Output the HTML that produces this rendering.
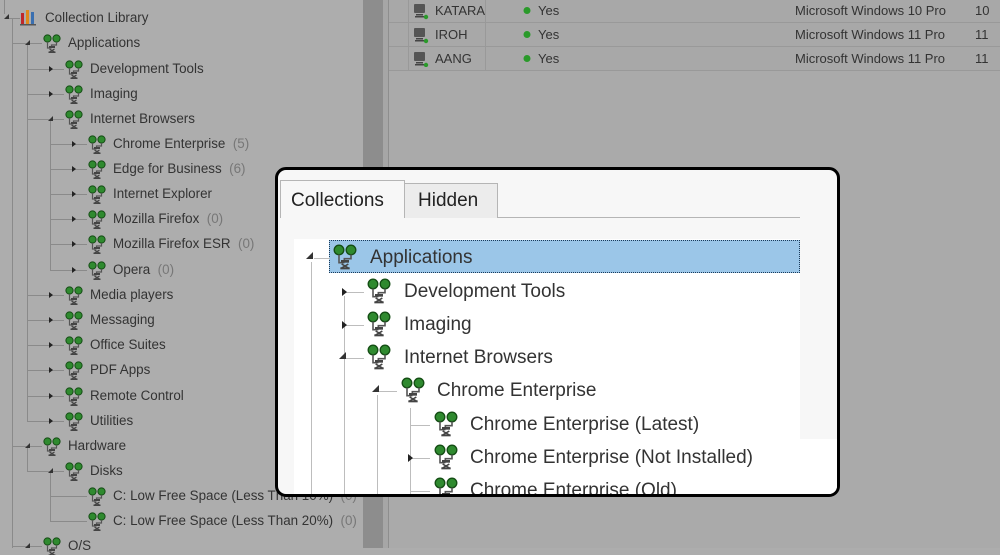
<!DOCTYPE html>
<html><head><meta charset="utf-8"><style>
*{margin:0;padding:0;box-sizing:border-box}
body{width:1000px;height:548px;overflow:hidden;background:#adadad;font-family:"Liberation Sans",sans-serif;position:relative}
.a{position:absolute}
.lt{position:absolute;font-size:13.4px;color:#333;white-space:nowrap;line-height:18px}
.lt .c{color:#777}
.vl{position:absolute;width:1px;background:#8a8a8a}
.hl{position:absolute;height:1px;background:#8a8a8a}
.ex{position:absolute;width:0;height:0;border-style:solid}
.col{border-width:3px 0 3px 4px;border-color:transparent transparent transparent #222}
.exp{border-width:0 0 5px 5px;border-color:transparent transparent #333 transparent}
.pt{position:absolute;font-size:19px;color:#333;white-space:nowrap;line-height:22px}
.pv{position:absolute;width:1px;background:#bdbdbd}
.ph{position:absolute;height:1px;background:#bdbdbd}
.tb{font-size:13px;color:#333;position:absolute;line-height:16px}
</style></head><body>
<svg width="0" height="0" style="position:absolute"><defs>
<g id="ico"><circle cx="4.5" cy="4.5" r="3.6" fill="#2f8a2f" stroke="#144d14" stroke-width="1"/><circle cx="13.5" cy="4.5" r="3.6" fill="#2f8a2f" stroke="#144d14" stroke-width="1"/><path d="M4.5 8v6h4M13.5 8v3h-5v3" stroke="#555" stroke-width="1.2" fill="none"/><rect x="6" y="12" width="6" height="2" fill="#444"/><path d="M6.5 15l5 3M11.5 15l-5 3" stroke="#444" stroke-width="1.2"/><rect x="5.5" y="17.5" width="7" height="1.5" fill="#444"/></g>
</defs></svg>

<div class="a" style="left:363px;top:0;width:20px;height:548px;background:#8d8d8d"></div>
<div class="a" style="left:383px;top:0;width:5px;height:548px;background:#a6a6a6"></div>
<div class="a" style="left:388px;top:0;width:1px;height:548px;background:#8e8e8e"></div>
<div class="a" style="left:389px;top:0;width:611px;height:548px;background:#aaaaaa"></div>
<div class="a" style="left:389px;top:0;width:611px;height:70px;background:#a8a8a8"></div>
<div class="hl" style="left:389px;top:22px;width:611px;background:#999"></div>
<div class="hl" style="left:389px;top:46px;width:611px;background:#999"></div>
<div class="hl" style="left:389px;top:70px;width:611px;background:#999"></div>
<div class="vl" style="left:408px;top:0;height:70px;background:#999"></div>
<div class="vl" style="left:485px;top:0;height:70px;background:#999"></div>
<svg class="a" style="left:413px;top:3px" width="16" height="64" viewBox="0 0 16 64">
<g id="pc"><rect x="1" y="1" width="11" height="9" rx="1" fill="#555"/><rect x="3" y="11" width="7" height="1.5" fill="#444"/><rect x="2" y="13" width="9" height="1.5" fill="#444"/><circle cx="13" cy="14" r="2.2" fill="#2a9a2a"/></g>
<use href="#pc" y="24"/><use href="#pc" y="48"/></svg>
<div class="tb" style="left:435px;top:3px">KATARA</div>
<div class="tb" style="left:435px;top:27px">IROH</div>
<div class="tb" style="left:435px;top:51px">AANG</div>
<svg class="a" style="left:522px;top:6px" width="10" height="58"><circle cx="5" cy="4.5" r="3.5" fill="#2a9a2a"/><circle cx="5" cy="28.5" r="3.5" fill="#2a9a2a"/><circle cx="5" cy="52.5" r="3.5" fill="#2a9a2a"/></svg>
<div class="tb" style="left:538px;top:3px">Yes</div>
<div class="tb" style="left:538px;top:27px">Yes</div>
<div class="tb" style="left:538px;top:51px">Yes</div>
<div class="tb" style="left:795px;top:3px">Microsoft Windows 10 Pro</div>
<div class="tb" style="left:795px;top:27px">Microsoft Windows 11 Pro</div>
<div class="tb" style="left:795px;top:51px">Microsoft Windows 11 Pro</div>
<div class="tb" style="left:975px;top:3px">10</div>
<div class="tb" style="left:975px;top:27px">11</div>
<div class="tb" style="left:975px;top:51px">11</div>

<div class="vl" style="left:12px;top:18px;height:530px"></div>
<div class="vl" style="left:27px;top:43px;height:378px"></div>
<div class="vl" style="left:27px;top:446px;height:25px"></div>
<div class="vl" style="left:50px;top:119px;height:151px"></div>
<div class="vl" style="left:50px;top:471px;height:50px"></div>
<div class="vl" style="left:4px;top:0;height:14px"></div>
<div class="hl" style="left:6px;top:18px;width:14px"></div>
<div class="hl" style="left:12px;top:43px;width:30px"></div>
<div class="hl" style="left:12px;top:446px;width:30px"></div>
<div class="hl" style="left:12px;top:546px;width:30px"></div>
<div class="hl" style="left:27px;top:69px;width:37px"></div>
<div class="hl" style="left:27px;top:94px;width:37px"></div>
<div class="hl" style="left:27px;top:119px;width:37px"></div>
<div class="hl" style="left:27px;top:295px;width:37px"></div>
<div class="hl" style="left:27px;top:320px;width:37px"></div>
<div class="hl" style="left:27px;top:345px;width:37px"></div>
<div class="hl" style="left:27px;top:370px;width:37px"></div>
<div class="hl" style="left:27px;top:396px;width:37px"></div>
<div class="hl" style="left:27px;top:421px;width:37px"></div>
<div class="hl" style="left:27px;top:471px;width:37px"></div>
<div class="hl" style="left:50px;top:144px;width:37px"></div>
<div class="hl" style="left:50px;top:169px;width:37px"></div>
<div class="hl" style="left:50px;top:194px;width:37px"></div>
<div class="hl" style="left:50px;top:219px;width:37px"></div>
<div class="hl" style="left:50px;top:244px;width:37px"></div>
<div class="hl" style="left:50px;top:270px;width:37px"></div>
<div class="hl" style="left:50px;top:496px;width:37px"></div>
<div class="hl" style="left:50px;top:521px;width:37px"></div>
<div class="ex exp" style="left:4px;top:14px"></div>
<div class="ex exp" style="left:25px;top:40px"></div>
<div class="ex exp" style="left:25px;top:443px"></div>
<div class="ex exp" style="left:25px;top:543px"></div>
<div class="ex exp" style="left:48px;top:116px"></div>
<div class="ex exp" style="left:48px;top:468px"></div>
<div class="ex col" style="left:49px;top:66px"></div>
<div class="ex col" style="left:49px;top:91px"></div>
<div class="ex col" style="left:49px;top:292px"></div>
<div class="ex col" style="left:49px;top:317px"></div>
<div class="ex col" style="left:49px;top:342px"></div>
<div class="ex col" style="left:49px;top:367px"></div>
<div class="ex col" style="left:49px;top:393px"></div>
<div class="ex col" style="left:49px;top:418px"></div>
<div class="ex col" style="left:72px;top:141px"></div>
<div class="ex col" style="left:72px;top:166px"></div>
<div class="ex col" style="left:72px;top:191px"></div>
<div class="ex col" style="left:72px;top:216px"></div>
<div class="ex col" style="left:72px;top:241px"></div>
<div class="ex col" style="left:72px;top:267px"></div>
<svg class="a" style="left:20px;top:9px" width="18" height="18"><rect x="1" y="4" width="3" height="12" fill="#c0282a"/><rect x="6" y="1" width="3" height="15" fill="#e08a1a"/><rect x="11" y="3" width="3" height="13" fill="#3a6fb0"/><rect x="0" y="15" width="16" height="1.5" fill="#555"/></svg>
<div class="lt" style="left:45px;top:9px">Collection Library</div>
<svg class="a" style="left:43px;top:34px;overflow:visible" width="18" height="520" viewBox="0 0 18 520">
<use href="#ico" y="0"/><use href="#ico" y="403"/><use href="#ico" y="503"/></svg>
<svg class="a" style="left:65px;top:60px;overflow:visible" width="18" height="420">
<use href="#ico" y="0"/><use href="#ico" y="25"/><use href="#ico" y="50"/><use href="#ico" y="226"/><use href="#ico" y="251"/><use href="#ico" y="276"/><use href="#ico" y="301"/><use href="#ico" y="327"/><use href="#ico" y="352"/><use href="#ico" y="402"/></svg>
<svg class="a" style="left:88px;top:135px;overflow:visible" width="18" height="400">
<use href="#ico" y="0"/><use href="#ico" y="25"/><use href="#ico" y="50"/><use href="#ico" y="75"/><use href="#ico" y="100"/><use href="#ico" y="126"/><use href="#ico" y="352"/><use href="#ico" y="377"/></svg>
<div class="lt" style="left:68px;top:34px">Applications</div>
<div class="lt" style="left:90px;top:60px">Development Tools</div>
<div class="lt" style="left:90px;top:85px">Imaging</div>
<div class="lt" style="left:90px;top:110px">Internet Browsers</div>
<div class="lt" style="left:113px;top:135px">Chrome Enterprise &nbsp;<span class="c">(5)</span></div>
<div class="lt" style="left:113px;top:160px">Edge for Business &nbsp;<span class="c">(6)</span></div>
<div class="lt" style="left:113px;top:185px">Internet Explorer</div>
<div class="lt" style="left:113px;top:210px">Mozilla Firefox &nbsp;<span class="c">(0)</span></div>
<div class="lt" style="left:113px;top:235px">Mozilla Firefox ESR &nbsp;<span class="c">(0)</span></div>
<div class="lt" style="left:113px;top:261px">Opera &nbsp;<span class="c">(0)</span></div>
<div class="lt" style="left:90px;top:286px">Media players</div>
<div class="lt" style="left:90px;top:311px">Messaging</div>
<div class="lt" style="left:90px;top:336px">Office Suites</div>
<div class="lt" style="left:90px;top:361px">PDF Apps</div>
<div class="lt" style="left:90px;top:387px">Remote Control</div>
<div class="lt" style="left:90px;top:412px">Utilities</div>
<div class="lt" style="left:68px;top:437px">Hardware</div>
<div class="lt" style="left:90px;top:462px">Disks</div>
<div class="lt" style="left:113px;top:487px">C: Low Free Space (Less Than 10%) &nbsp;<span class="c">(0)</span></div>
<div class="lt" style="left:113px;top:512px">C: Low Free Space (Less Than 20%) &nbsp;<span class="c">(0)</span></div>
<div class="lt" style="left:68px;top:537px">O/S</div>

<div class="a" style="left:275px;top:167px;width:565px;height:330px;border:3px solid #000;border-radius:11px;background:#f7f7f7;overflow:hidden">
 <div class="a" style="left:2px;top:47px;width:520px;height:1px;background:#b5b5b5"></div>
 <div class="a" style="left:126px;top:13px;width:94px;height:35px;background:#ececec;border:1px solid #b5b5b5;border-bottom:none"></div>
 <div class="a" style="left:2px;top:10px;width:125px;height:38px;background:#f7f7f7;border:1px solid #b5b5b5;border-bottom:none"></div>
 <div class="a" style="left:13px;top:20px;font-size:19px;color:#222">Collections</div>
 <div class="a" style="left:140px;top:20px;font-size:19px;color:#222">Hidden</div>
 <div class="a" style="left:16px;top:69px;width:506px;height:270px;background:#fff"></div>
 <div class="a" style="left:522px;top:269px;width:40px;height:70px;background:#fff"></div>
 <div class="a" style="left:51px;top:70px;width:471px;height:33px;background:#9bc6e8;border:1px dotted #1a3a5a"></div>
 <div class="pv" style="left:33px;top:92px;height:250px"></div>
 <div class="pv" style="left:66px;top:126px;height:220px"></div>
 <div class="pv" style="left:99px;top:225px;height:120px"></div>
 <div class="pv" style="left:132px;top:238px;height:100px"></div>
 <div class="ph" style="left:36px;top:88px;width:16px"></div>
 <div class="ph" style="left:68px;top:122px;width:18px"></div>
 <div class="ph" style="left:68px;top:155px;width:18px"></div>
 <div class="ph" style="left:68px;top:188px;width:18px"></div>
 <div class="ph" style="left:101px;top:221px;width:18px"></div>
 <div class="ph" style="left:132px;top:255px;width:20px"></div>
 <div class="ph" style="left:134px;top:288px;width:18px"></div>
 <div class="ph" style="left:132px;top:321px;width:20px"></div>
 <div class="ex exp" style="left:28px;top:82px;border-width:0 0 7px 7px"></div>
 <div class="ex exp" style="left:61px;top:182px;border-width:0 0 7px 7px"></div>
 <div class="ex exp" style="left:94px;top:215px;border-width:0 0 7px 7px"></div>
 <div class="ex col" style="left:64px;top:118px;border-width:4px 0 4px 5px"></div>
 <div class="ex col" style="left:64px;top:151px;border-width:4px 0 4px 5px"></div>
 <div class="ex col" style="left:130px;top:284px;border-width:4px 0 4px 5px"></div>
 <svg class="a" style="left:55px;top:74px;overflow:visible" width="24" height="24" viewBox="0 0 18 18"><use href="#ico"/></svg>
 <svg class="a" style="left:89px;top:108px;overflow:visible" width="24" height="24" viewBox="0 0 18 18"><use href="#ico"/></svg>
 <svg class="a" style="left:89px;top:141px;overflow:visible" width="24" height="24" viewBox="0 0 18 18"><use href="#ico"/></svg>
 <svg class="a" style="left:89px;top:174px;overflow:visible" width="24" height="24" viewBox="0 0 18 18"><use href="#ico"/></svg>
 <svg class="a" style="left:123px;top:207px;overflow:visible" width="24" height="24" viewBox="0 0 18 18"><use href="#ico"/></svg>
 <svg class="a" style="left:156px;top:241px;overflow:visible" width="24" height="24" viewBox="0 0 18 18"><use href="#ico"/></svg>
 <svg class="a" style="left:156px;top:274px;overflow:visible" width="24" height="24" viewBox="0 0 18 18"><use href="#ico"/></svg>
 <svg class="a" style="left:156px;top:307px;overflow:visible" width="24" height="24" viewBox="0 0 18 18"><use href="#ico"/></svg>
 <div class="pt" style="left:92px;top:77px">Applications</div>
 <div class="pt" style="left:126px;top:111px">Development Tools</div>
 <div class="pt" style="left:126px;top:144px">Imaging</div>
 <div class="pt" style="left:126px;top:177px">Internet Browsers</div>
 <div class="pt" style="left:159px;top:210px">Chrome Enterprise</div>
 <div class="pt" style="left:192px;top:244px">Chrome Enterprise (Latest)</div>
 <div class="pt" style="left:192px;top:277px">Chrome Enterprise (Not Installed)</div>
 <div class="pt" style="left:192px;top:310px">Chrome Enterprise (Old)</div>
</div>
</body></html>
